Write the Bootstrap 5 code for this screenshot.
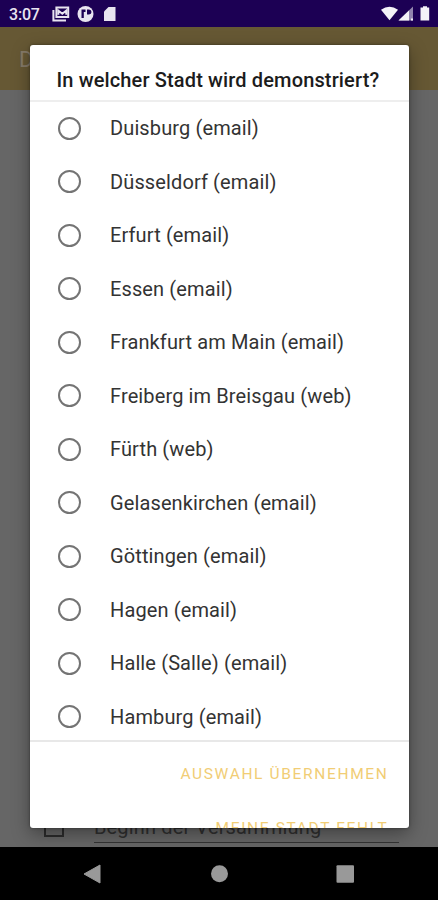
<!DOCTYPE html>
<html lang="de">
<head>
<meta charset="utf-8">
<meta name="viewport" content="width=device-width, initial-scale=1">
<title>In welcher Stadt wird demonstriert?</title>
<link href="https://cdn.jsdelivr.net/npm/bootstrap@5.3.0/dist/css/bootstrap.min.css" rel="stylesheet">
<style>
  body { font-family: Roboto, "Noto Sans", sans-serif; background: #000; }
  .screen { width: 438px; height: 900px; }
  .status-bar { height: 27px; background: #1c0054; color: #e8e4f0; font-size: 16px; font-weight: 500; letter-spacing: -.2px; line-height: 27px; padding: 1px 8px 0 9px; }
  .status-bar svg { display: block; }
  .status-icons { margin-left: 10px; }
  .app-bar { height: 63px; background: #665834; color: #857a68; font-size: 22px; line-height: 66px; padding-left: 19px; }
  .page-body { background: #666; }
  .date-row { height: 44px; padding: 0 39px 0 44px; }
  .date-box { width: 20px; height: 20px; border: 2px solid #2c2c2c; margin-top: 14px; }
  .date-field { margin-left: 30px; border-bottom: 1px solid #333; height: 40px; color: #303030; font-size: 20px; line-height: 49px; letter-spacing: .15px; }
  .nav-keys { height: 53px; background: #000; }
  .dialog { left: 29.5px; top: 44.500px; width: 379.500px; height: 783.500px; border-radius: 3px; box-shadow: 0 6px 18px rgba(0,0,0,.36), 0 0 3px rgba(0,0,0,.4); }
  .dialog-title { height: 57.500px; padding: 20px 0 0 27px; font-size: 20px; line-height: 30px; font-weight: 500; letter-spacing: .14px; color: #1c1c1c; border-bottom: 2px solid #eee; }
  .city-list { height: 640px; border-bottom: 2px solid #e8e8e8; }
  .city { height: 53.5px; padding-left: 28.500px; font-size: 20px; line-height: 53px; letter-spacing: .12px; color: #333; cursor: pointer; flex: none; }
  .city .form-check-input { width: 23px; height: 23px; margin: -1px 29px 0 0; border: 2px solid #747474; flex: none; }
  .dialog-actions { height: 86px; padding-right: 20.500px; }
  .action { height: 53.5px; line-height: 64px; font-size: 15.5px; letter-spacing: 1.65px; color: #f1cd75; flex: none; padding: 0; border: 0; background: none; }
</style>
</head>
<body>
<div class="screen position-relative overflow-hidden d-flex flex-column">
  <header class="status-bar d-flex justify-content-between align-items-center flex-shrink-0">
    <div class="d-flex align-items-center">
      <span>3:07</span>
      <svg class="status-icons" width="66" height="18" viewBox="0 0 66 18">
        <g fill="none" stroke="#e8e4f0" stroke-width="2">
          <path d="M6.400 2.600h11.800v9.400H6.400z"/>
          <path d="M3.400 5v10.600h12.600"/>
          <path d="M8.300 9.800V5.500l4 3.200 4-3.200v4.300"/>
        </g>
        <circle cx="35.500" cy="9" r="8" fill="#e8e4f0"/>
        <path d="M31.500 4.500h4v2.500h-1.700v6h-2.300zM37 4.500h2a2.500 2.500 0 0 1 0 5h-2z" fill="#1c0054"/>
        <path d="M58.500 2h7v14H54V6.500z" fill="#e8e4f0"/>
      </svg>
    </div>
    <svg width="50" height="18" viewBox="0 0 50 18" fill="#f4f2f8">
      <path d="M1 4.700Q9.500-1.200 18 4.700L9.500 15.300z"/>
      <path d="M18.500 15.500 33 1.500v14z" fill-opacity=".55"/>
      <path d="M18.500 15.500 29 5.400v10.100zM31 13.500h2v2h-2z"/>
      <path d="M43 1.200h4v1.300h2.200v13H40.500v-13H43z"/>
    </svg>
  </header>
  <div class="app-bar flex-shrink-0">D</div>
  <main class="page-body flex-grow-1 d-flex flex-column justify-content-end">
    <div class="date-row d-flex align-items-start">
      <div class="date-box flex-shrink-0"></div>
      <div class="date-field flex-grow-1">Beginn der Versammlung</div>
    </div>
  </main>
  <nav class="nav-keys flex-shrink-0">
    <svg class="d-block" width="438" height="53" viewBox="0 0 438 53" fill="#999">
      <path d="M84 27 100 18v18z" stroke="#999" stroke-width="1" stroke-linejoin="round"/>
      <circle cx="219.500" cy="26.700" r="8.500"/>
      <rect x="336.500" y="18.200" width="17.500" height="17.500" rx="1"/>
    </svg>
  </nav>

  <section class="dialog position-absolute bg-white overflow-hidden" role="dialog" aria-labelledby="dialogTitle">
    <h1 class="dialog-title m-0 text-nowrap" id="dialogTitle">In welcher Stadt wird demonstriert?</h1>
    <div class="city-list overflow-hidden d-flex flex-column">
      <label class="city d-flex align-items-center"><input class="form-check-input" type="radio" name="city"><span>Duisburg (email)</span></label>
      <label class="city d-flex align-items-center"><input class="form-check-input" type="radio" name="city"><span>Düsseldorf (email)</span></label>
      <label class="city d-flex align-items-center"><input class="form-check-input" type="radio" name="city"><span>Erfurt (email)</span></label>
      <label class="city d-flex align-items-center"><input class="form-check-input" type="radio" name="city"><span>Essen (email)</span></label>
      <label class="city d-flex align-items-center"><input class="form-check-input" type="radio" name="city"><span>Frankfurt am Main (email)</span></label>
      <label class="city d-flex align-items-center"><input class="form-check-input" type="radio" name="city"><span>Freiberg im Breisgau (web)</span></label>
      <label class="city d-flex align-items-center"><input class="form-check-input" type="radio" name="city"><span>Fürth (web)</span></label>
      <label class="city d-flex align-items-center"><input class="form-check-input" type="radio" name="city"><span>Gelasenkirchen (email)</span></label>
      <label class="city d-flex align-items-center"><input class="form-check-input" type="radio" name="city"><span>Göttingen (email)</span></label>
      <label class="city d-flex align-items-center"><input class="form-check-input" type="radio" name="city"><span>Hagen (email)</span></label>
      <label class="city d-flex align-items-center"><input class="form-check-input" type="radio" name="city"><span>Halle (Salle) (email)</span></label>
      <label class="city d-flex align-items-center"><input class="form-check-input" type="radio" name="city"><span>Hamburg (email)</span></label>
    </div>
    <div class="dialog-actions d-flex flex-column align-items-end overflow-hidden">
      <button class="action" type="button">AUSWAHL ÜBERNEHMEN</button>
      <button class="action" type="button">MEINE STADT FEHLT</button>
    </div>
  </section>
</div>
<script src="https://cdn.jsdelivr.net/npm/bootstrap@5.3.0/dist/js/bootstrap.bundle.min.js"></script>
</body>
</html>
